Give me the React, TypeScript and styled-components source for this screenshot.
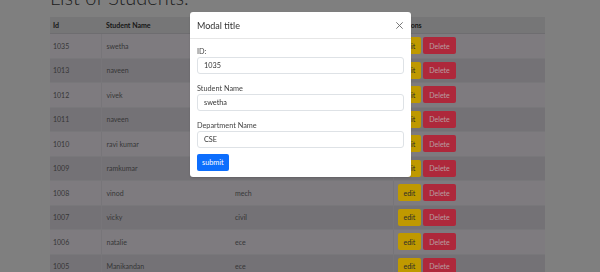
import React from 'react'
import styled, { createGlobalStyle } from 'styled-components'

interface Student {
  id: number
  name: string
  dept: string
}

const students: Student[] = [
  { id: 1035, name: 'swetha', dept: 'CSE' },
  { id: 1013, name: 'naveen', dept: 'it' },
  { id: 1012, name: 'vivek', dept: 'eee' },
  { id: 1011, name: 'naveen', dept: 'it' },
  { id: 1010, name: 'ravi kumar', dept: 'mech' },
  { id: 1009, name: 'ramkumar', dept: 'civil' },
  { id: 1008, name: 'vinod', dept: 'mech' },
  { id: 1007, name: 'vicky', dept: 'civil' },
  { id: 1006, name: 'natalie', dept: 'ece' },
  { id: 1005, name: 'Manikandan', dept: 'ece' },
]

const GlobalStyle = createGlobalStyle`
  html, body {
    margin: 0;
    padding: 0;
    overflow: hidden;
    background: #aaaaaa;
    font-family: Lato, "Open Sans", sans-serif;
    color: #212529;
  }
`

export default function App() {
  const current = students[0]
  return (
    <>
      <GlobalStyle />
      <Page>
        <Title>List of Students.</Title>
        <Table>
          <thead>
            <tr>
              <Th>Id</Th>
              <Th>Student Name</Th>
              <Th>Department Name</Th>
              <Th>Actions</Th>
            </tr>
          </thead>
          <tbody>
            {students.map((s, i) => (
              <Row key={s.id} striped={i % 2 === 1}>
                <Td>{s.id}</Td>
                <Td>{s.name}</Td>
                <Td>{s.dept}</Td>
                <Td>
                  <Actions>
                    <Btn variant="edit">edit</Btn>
                    <Btn variant="delete">Delete</Btn>
                  </Actions>
                </Td>
              </Row>
            ))}
          </tbody>
        </Table>
      </Page>
      <Backdrop />
      <Modal>
        <ModalHeader>
          <ModalTitle>Modal title</ModalTitle>
          <Close aria-label="close">
            <svg width="7" height="7" viewBox="0 0 7 7">
              <path d="M0.3 0.3 L6.7 6.7 M6.7 0.3 L0.3 6.7" stroke="#6a6a6a" strokeWidth="0.9" />
            </svg>
          </Close>
        </ModalHeader>
        <ModalBody>
          <Label>ID:</Label>
          <Input value={current.id} readOnly />
          <Label>Student Name</Label>
          <Input value={current.name} readOnly />
          <Label>Department Name</Label>
          <Input value={current.dept} readOnly />
          <Submit>submit</Submit>
        </ModalBody>
      </Modal>
    </>
  )
}

const Page = styled.div`
  padding: 0 50px;
  width: 495px;
`

const Title = styled.h1`
  margin: -15px 0 8px 0;
  font-size: 20px;
  line-height: 24px;
  font-weight: 300;
  color: #2a2a2a;
`

const Table = styled.table`
  width: 495px;
  border-collapse: collapse;
  table-layout: fixed;
  font-size: 7px;

  th:nth-child(1) { width: 43px; }
  th:nth-child(2) { width: 119px; }
  th:nth-child(3) { width: 153px; }
`

const Th = styled.th`
  text-align: left;
  font-weight: 700;
  height: 16px;
  padding: 0 5px;
  background: #9e9e9f;
  border-bottom: 1px solid #939296;
  color: #1c1c1c;

  &:first-child {
    padding-left: 3px;
  }
`

const Row = styled.tr<{ striped?: boolean }>`
  height: 24.5px;
  background: ${({ striped }) => (striped ? '#9b989e' : '#a8a5aa')};
`

const Td = styled.td`
  padding: 0 5px;
  border-bottom: 1px solid #a19fa3;
  border-left: 1px solid #9f9da2;
  color: #4a4a4a;

  &:first-child {
    border-left: none;
    padding-left: 3px;
  }
  &:nth-child(3) {
    border-left: none;
  }
`

const Actions = styled.div`
  display: flex;
  gap: 2px;
  margin-left: -1px;
`

const Btn = styled.button<{ variant: 'edit' | 'delete' }>`
  height: 17px;
  padding: 0 6px;
  border: none;
  border-radius: 2px;
  font-family: inherit;
  font-size: 7px;
  background: ${({ variant }) => (variant === 'edit' ? '#ffcd00' : '#e8364f')};
  color: ${({ variant }) => (variant === 'edit' ? '#3a3a3a' : '#f4d0d6')};
`

const Backdrop = styled.div`
  position: fixed;
  inset: 0;
  background: rgba(0, 0, 0, 0.25);
`

const Modal = styled.div`
  position: fixed;
  left: 190px;
  top: 12px;
  width: 221px;
  background: #fff;
  border-radius: 3px;
  box-shadow: 0 1px 2px rgba(0, 0, 0, 0.15);
`

const ModalHeader = styled.div`
  display: flex;
  align-items: center;
  justify-content: space-between;
  height: 26px;
  padding: 0 8px 0 7px;
  border-bottom: 1px solid #e6e6e6;
`

const ModalTitle = styled.h5`
  margin: 0;
  font-size: 9px;
  font-weight: 400;
  color: #333;
`

const Close = styled.button`
  display: flex;
  padding: 0;
  margin-top: 1px;
  border: none;
  background: none;
`

const ModalBody = styled.div`
  display: flex;
  flex-direction: column;
  align-items: flex-start;
  padding: 7px 7px 6px 7px;
`

const Label = styled.label`
  font-size: 7.3px;
  line-height: 11px;
  color: #444;
`

const Input = styled.input`
  box-sizing: border-box;
  width: 100%;
  height: 17px;
  margin: 0 0 9px 0;
  padding: 0 6px;
  border: 1px solid #dee2e6;
  border-radius: 3px;
  font-family: inherit;
  font-size: 7.3px;
  color: #333;
  outline: none;

  &:last-of-type {
    margin-bottom: 6px;
  }
`

const Submit = styled.button`
  height: 17px;
  padding: 0 5px;
  border: none;
  border-radius: 2px;
  background: #0d6efd;
  color: #fff;
  font-family: inherit;
  font-size: 7.3px;
`
